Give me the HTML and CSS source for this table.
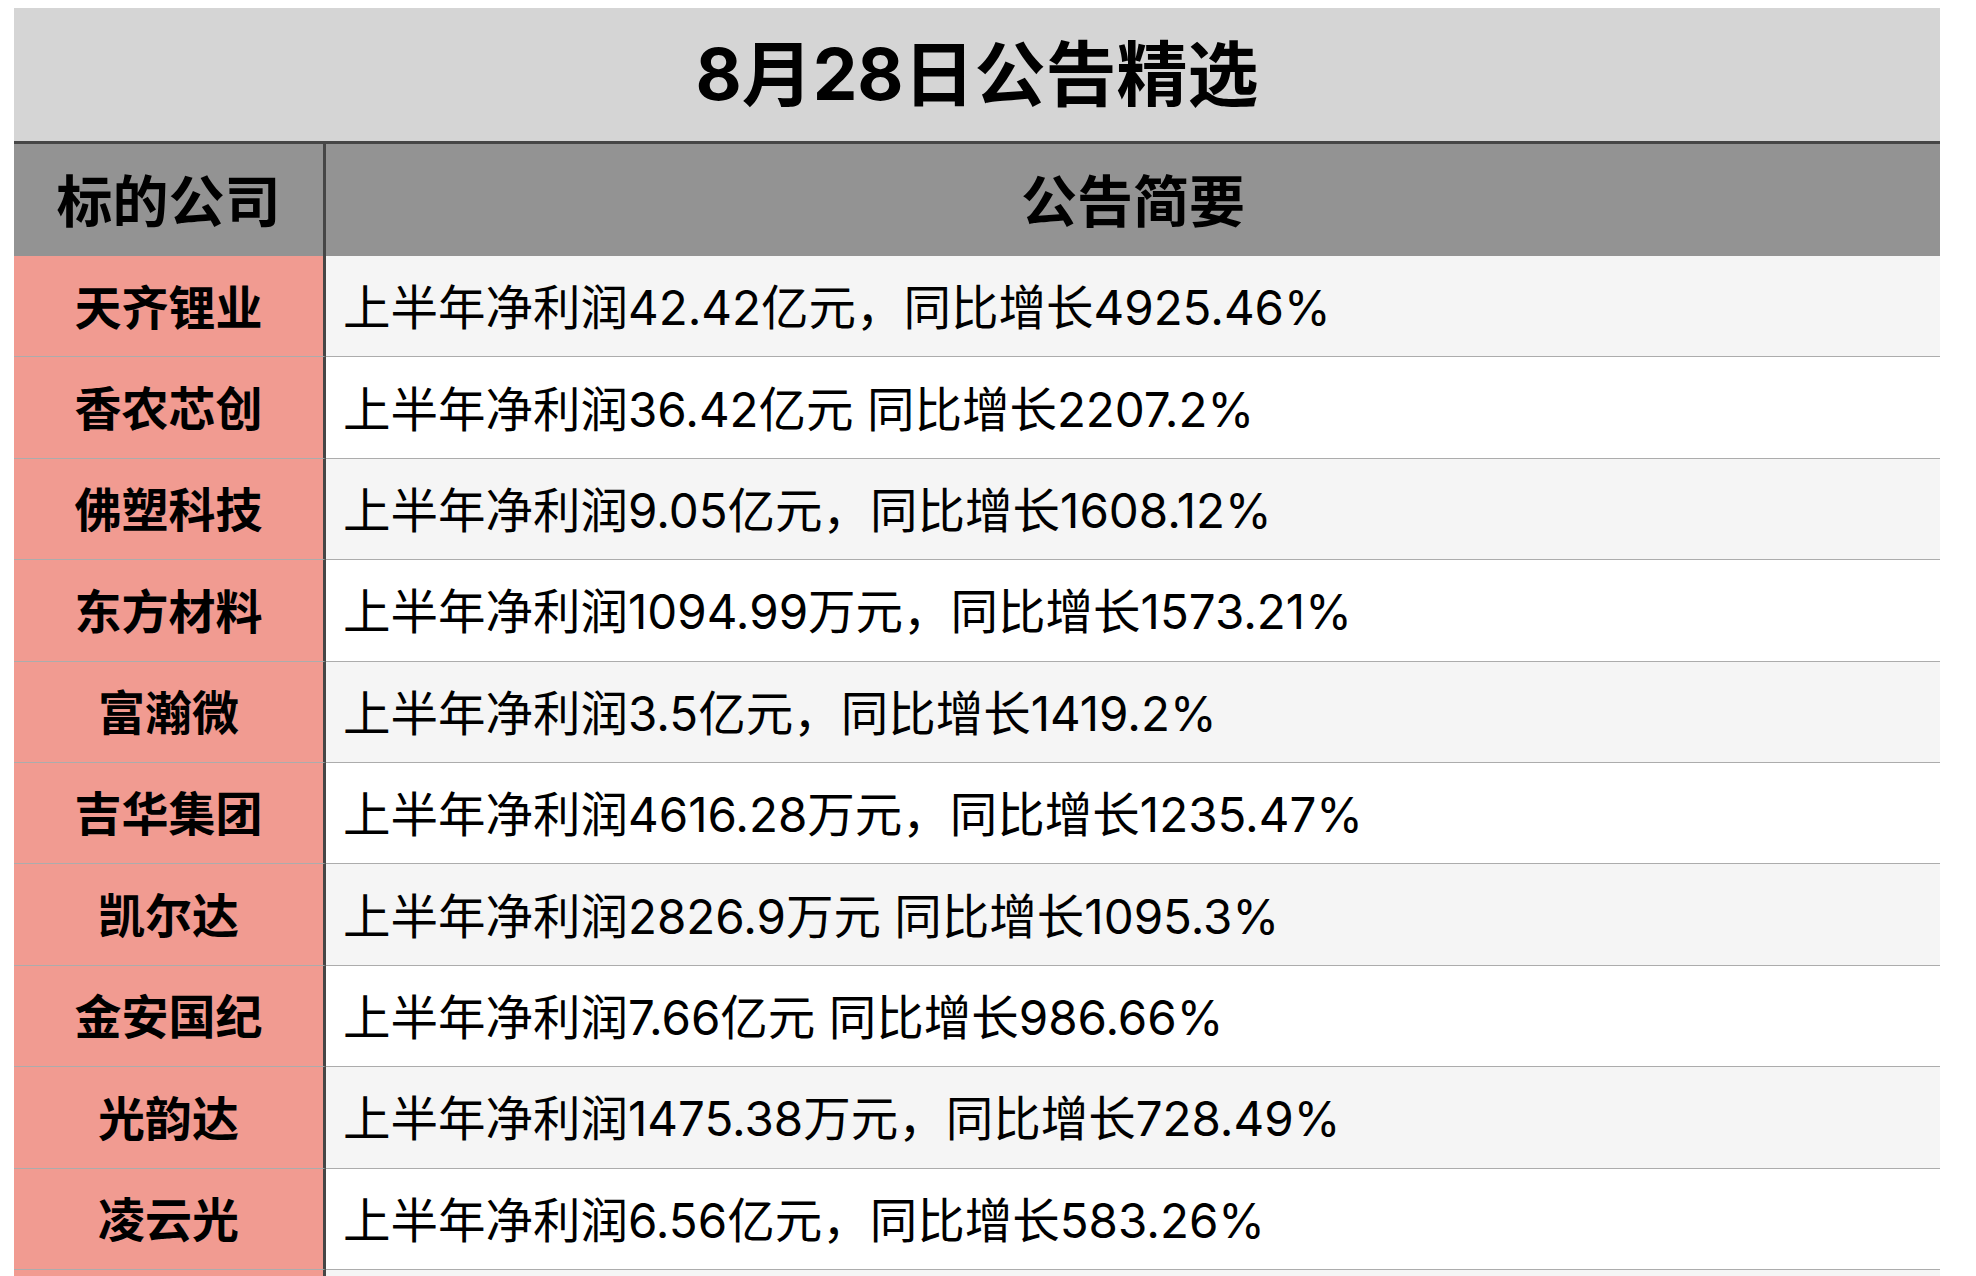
FILE: index.html
```html
<!DOCTYPE html>
<html lang="zh-CN">
<head>
<meta charset="utf-8">
<title>8月28日公告精选</title>
<link rel="stylesheet" href="styles.css">
</head>
<body>
<div class="sheet">
  <div class="title">8月28日公告精选</div>
  <div class="row head">
    <div class="cell name">标的公司</div>
    <div class="cell summary">公告简要</div>
  </div>
  <div class="row alt">
    <div class="cell name">天齐锂业</div>
    <div class="cell summary">上半年净利润42.42亿元，同比增长4925.46%</div>
  </div>
  <div class="row">
    <div class="cell name">香农芯创</div>
    <div class="cell summary">上半年净利润36.42亿元 同比增长2207.2%</div>
  </div>
  <div class="row alt">
    <div class="cell name">佛塑科技</div>
    <div class="cell summary">上半年净利润9.05亿元，同比增长1608.12%</div>
  </div>
  <div class="row">
    <div class="cell name">东方材料</div>
    <div class="cell summary">上半年净利润1094.99万元，同比增长1573.21%</div>
  </div>
  <div class="row alt">
    <div class="cell name">富瀚微</div>
    <div class="cell summary">上半年净利润3.5亿元，同比增长1419.2%</div>
  </div>
  <div class="row">
    <div class="cell name">吉华集团</div>
    <div class="cell summary">上半年净利润4616.28万元，同比增长1235.47%</div>
  </div>
  <div class="row alt">
    <div class="cell name">凯尔达</div>
    <div class="cell summary">上半年净利润2826.9万元 同比增长1095.3%</div>
  </div>
  <div class="row">
    <div class="cell name">金安国纪</div>
    <div class="cell summary">上半年净利润7.66亿元 同比增长986.66%</div>
  </div>
  <div class="row alt">
    <div class="cell name">光韵达</div>
    <div class="cell summary">上半年净利润1475.38万元，同比增长728.49%</div>
  </div>
  <div class="row">
    <div class="cell name">凌云光</div>
    <div class="cell summary">上半年净利润6.56亿元，同比增长583.26%</div>
  </div>
  <div class="row alt">
    <div class="cell name"></div>
    <div class="cell summary"></div>
  </div>
</div>
</body>
</html>
```
FILE: styles.css
```css
html, body {
  margin: 0;
  padding: 0;
  background: #ffffff;
}
body {
  padding: 8px 36px 0 14px;
  font-family: "Inter", "Noto Sans CJK SC", sans-serif;
  line-height: 1.2;
  color: #000000;
}
.sheet {
  width: 1926px;
}
.title {
  height: 136px;
  box-sizing: border-box;
  background: #d5d5d5;
  border-bottom: 3px solid #464646;
  display: flex;
  align-items: center;
  justify-content: center;
  font-size: 71px;
  font-weight: 700;
}
.row {
  display: grid;
  grid-template-columns: 312px 1fr;
  height: 101.4px;
  background: #ffffff;
}
.row.alt .summary {
  background: #f5f5f5;
}
.cell {
  display: flex;
  align-items: center;
  box-sizing: border-box;
  padding-top: 3px;
  border-bottom: 1px solid #acacac;
  white-space: nowrap;
}
.name {
  background: #f19b91;
  border-right: 3px solid #464646;
  justify-content: center;
  font-size: 47px;
  font-weight: 700;
}
.summary {
  font-size: 47.5px;
  padding-left: 17px;
}
.row.head {
  height: 112px;
  background: #939393;
}
.row.head .cell {
  background: #939393;
  border-bottom: none;
  padding-top: 6px;
  font-size: 56px;
  font-weight: 700;
}
.row.head .summary {
  justify-content: center;
  padding-left: 0;
}
```
